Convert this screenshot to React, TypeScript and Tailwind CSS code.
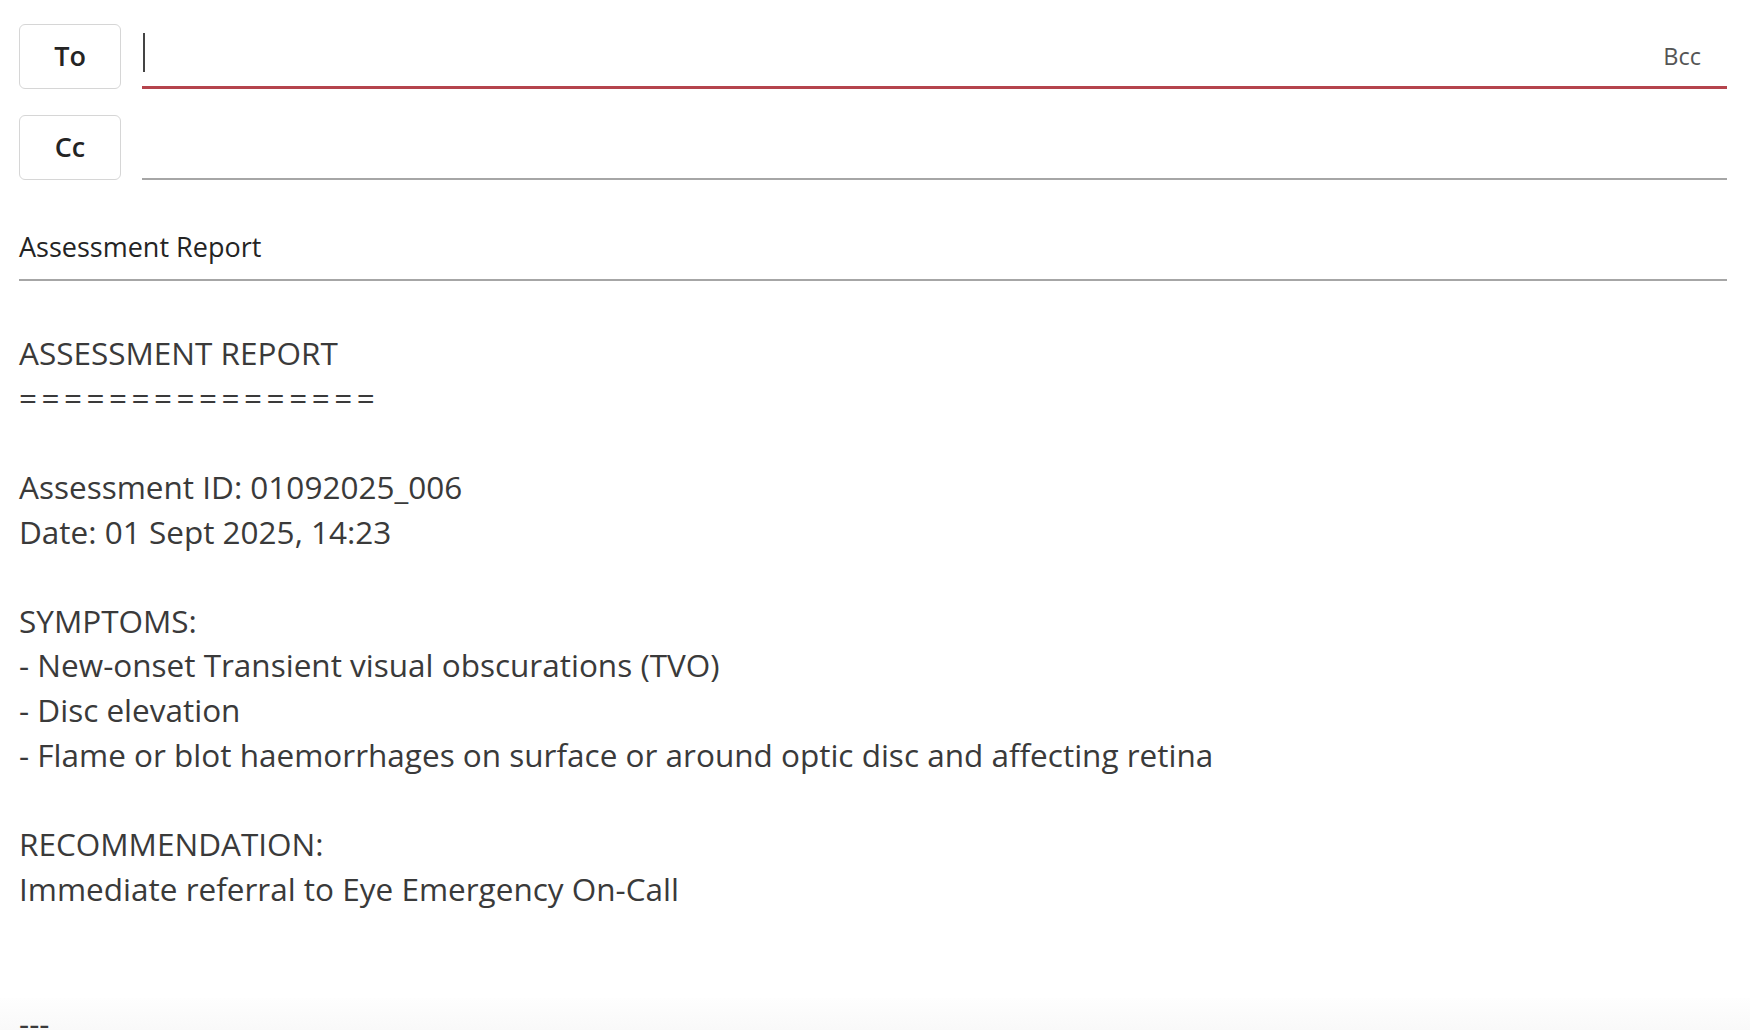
import React from "react";

const bodyLines = [
  "ASSESSMENT REPORT",
  "================",
  "",
  "Assessment ID: 01092025_006",
  "Date: 01 Sept 2025, 14:23",
  "",
  "SYMPTOMS:",
  "- New-onset Transient visual obscurations (TVO)",
  "- Disc elevation",
  "- Flame or blot haemorrhages on surface or around optic disc and affecting retina",
  "",
  "RECOMMENDATION:",
  "Immediate referral to Eye Emergency On-Call",
  "",
  "",
  "---",
];

export default function App() {
  return (
    <div
      className="relative h-[1030px] w-full overflow-hidden bg-white pl-[19px] pr-[23px]"
      style={{ fontFamily: '"Open Sans", "Noto Sans", sans-serif' }}
    >
      <div className="pointer-events-none absolute bottom-0 left-0 right-0 h-[32px] bg-gradient-to-b from-[#fefefe] to-[#f9f9f9]" />
      <div className="relative flex flex-col gap-[26px] pt-[24px]">
        <div className="flex h-[65px] items-stretch gap-[21px]">
          <button className="flex w-[102px] shrink-0 items-center justify-center rounded-[6px] border-[1.5px] border-[#d6d6d6] bg-white text-[27px] font-semibold text-[#242424]">
            To
          </button>
          <div className="flex flex-1 items-start justify-between border-b-[3px] border-[#b5444d]">
            <span className="ml-[1px] mt-[9px] h-[39px] w-[2px] bg-[#444]" />
            <span className="mr-[26px] mt-[14px] text-[23.5px] leading-[36px] text-[#555]">Bcc</span>
          </div>
        </div>
        <div className="flex h-[65px] items-stretch gap-[21px]">
          <button className="flex w-[102px] shrink-0 items-center justify-center rounded-[6px] border-[1.5px] border-[#d6d6d6] bg-white text-[27px] font-semibold text-[#242424]">
            Cc
          </button>
          <div className="flex-1 border-b-2 border-[#a6a6a6]" />
        </div>
      </div>
      <div className="relative border-b-2 border-[#a6a6a6] pb-[14px] pt-[49px] text-[27px] leading-[36px] text-[#242424]">
        Assessment Report
      </div>
      <div className="relative mt-[50px] text-[31.5px] leading-[44.65px] text-[#3a3a3a]">
        {bodyLines.map((l, i) => (
          <div
            key={i}
            className={i === 1 ? "h-[44.65px] whitespace-pre tracking-[4.5px]" : "h-[44.65px] whitespace-pre"}
          >
            {l}
          </div>
        ))}
      </div>
    </div>
  );
}
